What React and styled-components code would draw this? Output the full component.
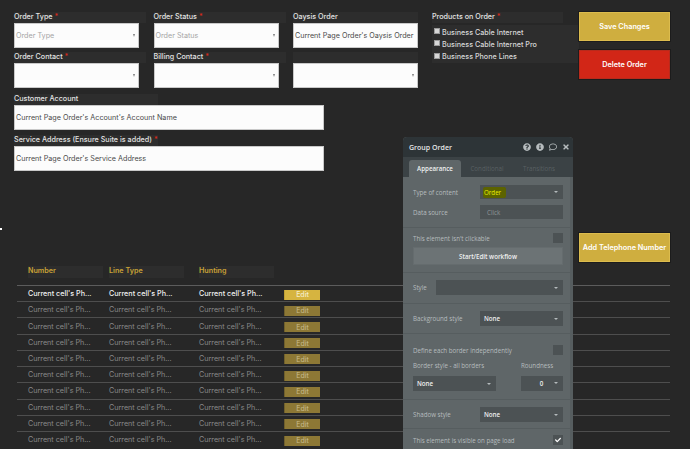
import styled, { createGlobalStyle } from "styled-components";
import { FaQuestionCircle, FaInfoCircle, FaRegComment, FaTimes, FaCheck } from "react-icons/fa";

const GlobalStyle = createGlobalStyle`
  html, body {
    margin: 0;
    padding: 0;
    background: #272727;
  }
  * {
    box-sizing: border-box;
  }
`;

const Page = styled.div`
  position: relative;
  width: 690px;
  height: 449px;
  overflow: hidden;
  padding-top: 12px;
  background: #272727;
  font-family: Inter, "Liberation Sans", sans-serif;
  font-size: 7.2px;
  color: #e4e4e4;
`;
const Dot = styled.div`
  position: absolute;
  left: 0;
  top: 228px;
  width: 2px;
  height: 2px;
  background: #fff;
`;
const TopRow = styled.div`
  display: flex;
  align-items: flex-start;
  padding-left: 14px;
`;
const FormColumn = styled.div`
  width: 404px;
  display: flex;
  flex-direction: column;
`;
const FormGrid = styled.div`
  display: grid;
  grid-template-columns: repeat(3, 125px);
  column-gap: 14.5px;
`;
const Field = styled.div`
  display: flex;
  flex-direction: column;
  width: ${(p) => p.$width || "auto"};
  margin-bottom: ${(p) => p.$mb || 4}px;
`;
const Label = styled.div`
  height: 11px;
  line-height: 10px;
  width: ${(p) => p.$width || "132px"};
  background: #2d2d2d;
  font-weight: 500;
  white-space: nowrap;
`;
const Req = styled.span`
  color: #d32a1a;
  margin-left: 2px;
`;
const InputBox = styled.div`
  height: 25px;
  background: #fcfcfc;
  border: 1px solid #c9c9c9;
  display: flex;
  align-items: center;
  justify-content: space-between;
  padding: 0 2px 0 1px;
  color: ${(p) => (p.$placeholder ? "#a5a5a5" : "#4a4a4a")};
  font-weight: 400;
  white-space: nowrap;
  overflow: hidden;
`;
const SmallCaret = styled.span`
  width: 0;
  height: 0;
  border-left: 1.5px solid transparent;
  border-right: 1.5px solid transparent;
  border-top: 3px solid #808080;
  margin-right: 1px;
`;
const Products = styled.div`
  width: 147px;
  margin-left: 14px;
`;
const CheckList = styled.div`
  margin-top: 2px;
  padding-top: 1px;
  height: 38px;
  background: #2d2d2d;
  display: flex;
  flex-direction: column;
`;
const CheckRow = styled.div`
  height: 12.6px;
  display: flex;
  align-items: center;
  gap: 2px;
  padding-left: 2px;
  white-space: nowrap;
  font-weight: 500;
  color: #d8d8d8;
`;
const CheckBox = styled.span`
  width: 6px;
  height: 6px;
  background: #d6d6d6;
  border: 1px solid #9a9a9a;
  margin-top: -2px;
`;
const Actions = styled.div`
  width: 91px;
  display: flex;
  flex-direction: column;
  gap: 9px;
`;
const ActionButton = styled.div`
  width: 91px;
  height: 29px;
  display: flex;
  align-items: center;
  justify-content: center;
  color: #fff;
  font-weight: 600;
  font-size: 7.3px;
  white-space: nowrap;
  background: ${(p) => (p.$danger ? "#d22617" : "#cfae3f")};
  border: 1px solid ${(p) => (p.$danger ? "#b82a1c" : "#dcbc4e")};
  box-shadow: 0 0 0 1px #1c1c1c;
`;
const AddRow = styled.div`
  display: flex;
  justify-content: flex-end;
  padding-right: 20px;
  margin-top: 58px;
`;
const TableHead = styled.div`
  display: grid;
  grid-template-columns: 81px 90px 85px;
  margin: 4px 0 0 28px;
  height: 19px;
`;
const HeadCell = styled.div`
  width: 75px;
  height: 12px;
  line-height: 9px;
  background: #2d2d2d;
  color: #c9a236;
  font-weight: 600;
`;
const Row = styled.div`
  display: grid;
  grid-template-columns: 81px 90px 85px 36px;
  align-items: center;
  margin-left: 17px;
  width: 653px;
  height: 16.22px;
  padding-left: 11px;
  border-top: 1px solid ${(p) => (p.$active ? "#5c5c5c" : "#4e4e4e")};
  color: ${(p) => (p.$active ? "#f2f2f2" : "#8a8a8a")};
  font-weight: ${(p) => (p.$active ? 500 : 400)};
`;
const Cell = styled.div`
  white-space: nowrap;
`;
const EditButton = styled.div`
  height: 10px;
  margin-top: 2px;
  display: flex;
  align-items: center;
  justify-content: center;
  background: ${(p) => (p.$active ? "#d6b440" : "#8d7835")};
  border-left: 1px solid ${(p) => (p.$active ? "#bfa035" : "#6f5f2c")};
  color: ${(p) => (p.$active ? "#f4ecc8" : "#c9bd8e")};
  font-size: 7px;
`;

const Panel = styled.div`
  position: absolute;
  left: 403px;
  top: 137px;
  width: 170px;
  height: 312px;
  background: #5f6668;
  border-radius: 4px 4px 0 0;
  border-right: 3px solid #565d5f;
  font-family: "Open Sans", "Liberation Sans", sans-serif;
  font-size: 6.2px;
  color: #b6bcbe;
`;
const PanelHeader = styled.div`
  height: 20px;
  margin-right: -3px;
  background: #2d3437;
  border-radius: 4px 4px 0 0;
  display: flex;
  align-items: center;
  justify-content: space-between;
  padding: 0 3px 0 6px;
  color: #e6e8e8;
  font-size: 7px;
  font-weight: 600;
`;
const HeaderIcons = styled.div`
  display: flex;
  align-items: center;
  gap: 5px;
  color: #b6bcbe;
  font-size: 8px;
`;
const Tabs = styled.div`
  height: 20px;
  margin-right: -3px;
  padding: 3px 0 0 6px;
  background: #3b4245;
  display: flex;
`;
const Tab = styled.div`
  width: ${(p) => p.$width}px;
  display: flex;
  align-items: center;
  justify-content: center;
  color: ${(p) => (p.$active ? "#eef0f0" : "#596063")};
  background: ${(p) => (p.$active ? "#5f6668" : "transparent")};
  border-radius: 3px 3px 0 0;
  font-weight: ${(p) => (p.$active ? 600 : 400)};
`;
const Section = styled.div`
  padding: ${(p) => p.$pt}px 7px ${(p) => p.$pb}px 10px;
  border-bottom: 1px solid #565d5f;
  display: flex;
  flex-direction: column;
  gap: ${(p) => p.$gap || 0}px;
`;
const PanelRow = styled.div`
  display: flex;
  align-items: center;
  justify-content: space-between;
  height: ${(p) => p.$h || 15}px;
  white-space: nowrap;
`;
const PanelSelect = styled.div`
  width: ${(p) => p.$width}px;
  height: ${(p) => p.$h || 15}px;
  background: #4c5254;
  display: flex;
  align-items: center;
  justify-content: ${(p) => (p.$center ? "center" : "space-between")};
  position: relative;
  padding: 0 5px 0 4px;
  color: #eceeee;
  font-weight: 600;
`;
const PanelInput = styled(PanelSelect)`
  color: #8f9597;
  font-weight: 400;
  padding-left: 7px;
`;
const Caret = styled.span`
  width: 0;
  height: 0;
  border-left: 2.5px solid transparent;
  border-right: 2.5px solid transparent;
  border-top: 2.5px solid #b4babc;
  ${(p) => p.$over && "position: absolute; right: 5px; top: 6px;"}
`;
const Highlight = styled.span`
  background: #5c6300;
  color: #e8f000;
  padding: 1px 5px 1px 1px;
  margin-left: -1px;
  border-radius: 2px;
  font-weight: 400;
`;
const PanelCheck = styled.div`
  width: 10px;
  height: 10px;
  background: #4c5254;
  display: flex;
  align-items: center;
  justify-content: center;
  color: #fff;
  font-size: 6px;
`;
const WorkflowButton = styled.div`
  height: 18px;
  background: #6c7375;
  border: 1px solid #656c6e;
  display: flex;
  align-items: center;
  justify-content: center;
  color: #eef0f0;
  font-weight: 600;
  font-size: 6.2px;
`;
const SplitRow = styled.div`
  display: flex;
  justify-content: space-between;
`;
const SplitColumn = styled.div`
  display: flex;
  flex-direction: column;
  gap: 5px;
`;
const SplitLabel = styled.div`
  height: 10px;
  line-height: 10px;
  white-space: nowrap;
`;

const rows = Array.from({ length: 10 }, (_, i) => i);

export default function App() {
  return (
    <>
      <GlobalStyle />
      <Page>
        <Dot />
        <TopRow>
          <FormColumn>
            <FormGrid>
              <Field>
                <Label>Order Type<Req>*</Req></Label>
                <InputBox $placeholder>Order Type<SmallCaret /></InputBox>
              </Field>
              <Field>
                <Label>Order Status<Req>*</Req></Label>
                <InputBox $placeholder>Order Status<SmallCaret /></InputBox>
              </Field>
              <Field>
                <Label $width="125px">Oaysis Order</Label>
                <InputBox>Current Page Order's Oaysis Order</InputBox>
              </Field>
              <Field $mb={6}>
                <Label>Order Contact<Req>*</Req></Label>
                <InputBox><span /><SmallCaret /></InputBox>
              </Field>
              <Field $mb={6}>
                <Label>Billing Contact<Req>*</Req></Label>
                <InputBox><span /><SmallCaret /></InputBox>
              </Field>
              <Field $mb={6}>
                <Label $width="125px" />
                <InputBox><span /><SmallCaret /></InputBox>
              </Field>
            </FormGrid>
            <Field $width="310px" $mb={5}>
              <Label $width="144px">Customer Account</Label>
              <InputBox>Current Page Order's Account's Account Name</InputBox>
            </Field>
            <Field $width="310px">
              <Label $width="144px">Service Address (Ensure Suite is added)<Req>*</Req></Label>
              <InputBox>Current Page Order's Service Address</InputBox>
            </Field>
          </FormColumn>
          <Products>
            <Label $width="131px">Products on Order<Req>*</Req></Label>
            <CheckList>
              <CheckRow><CheckBox />Business Cable Internet</CheckRow>
              <CheckRow><CheckBox />Business Cable Internet Pro</CheckRow>
              <CheckRow><CheckBox />Business Phone Lines</CheckRow>
            </CheckList>
          </Products>
          <Actions>
            <ActionButton>Save Changes</ActionButton>
            <ActionButton $danger>Delete Order</ActionButton>
          </Actions>
        </TopRow>
        <AddRow>
          <ActionButton>Add Telephone Number</ActionButton>
        </AddRow>
        <TableHead>
          <HeadCell>Number</HeadCell>
          <HeadCell>Line Type</HeadCell>
          <HeadCell>Hunting</HeadCell>
        </TableHead>
        {rows.map((i) => (
          <Row key={i} $active={i === 0}>
            <Cell>Current cell's Ph...</Cell>
            <Cell>Current cell's Ph...</Cell>
            <Cell>Current cell's Ph...</Cell>
            <EditButton $active={i === 0}>Edit</EditButton>
          </Row>
        ))}
        <Panel>
          <PanelHeader>
            Group Order
            <HeaderIcons>
              <FaQuestionCircle />
              <FaInfoCircle />
              <FaRegComment />
              <FaTimes />
            </HeaderIcons>
          </PanelHeader>
          <Tabs>
            <Tab $active $width={52}>Appearance</Tab>
            <Tab $width={52}>Conditional</Tab>
            <Tab $width={52}>Transitions</Tab>
          </Tabs>
          <Section $pt={8} $pb={8} $gap={6}>
            <PanelRow $h={14}>
              Type of content
              <PanelSelect $width={83} $h={14}>
                <Highlight>Order</Highlight>
                <Caret />
              </PanelSelect>
            </PanelRow>
            <PanelRow $h={14}>
              Data source
              <PanelInput $width={83} $h={14}>Click</PanelInput>
            </PanelRow>
          </Section>
          <Section $pt={5} $pb={7} $gap={4}>
            <PanelRow $h={10}>
              This element isn't clickable
              <PanelCheck />
            </PanelRow>
            <WorkflowButton>Start/Edit workflow</WorkflowButton>
          </Section>
          <Section $pt={7} $pb={8}>
            <PanelRow>
              Style
              <PanelSelect $width={127}><span /><Caret /></PanelSelect>
            </PanelRow>
          </Section>
          <Section $pt={7} $pb={7}>
            <PanelRow>
              Background style
              <PanelSelect $width={83}>None<Caret /></PanelSelect>
            </PanelRow>
          </Section>
          <Section $pt={11} $pb={8} $gap={6}>
            <PanelRow $h={10}>
              Define each border independently
              <PanelCheck />
            </PanelRow>
            <SplitRow>
              <SplitColumn>
                <SplitLabel>Border style - all borders</SplitLabel>
                <PanelSelect $width={83}>None<Caret /></PanelSelect>
              </SplitColumn>
              <SplitColumn>
                <SplitLabel>Roundness</SplitLabel>
                <PanelSelect $width={42} $center>0<Caret $over /></PanelSelect>
              </SplitColumn>
            </SplitRow>
          </Section>
          <Section $pt={7} $pb={6}>
            <PanelRow>
              Shadow style
              <PanelSelect $width={83}>None<Caret /></PanelSelect>
            </PanelRow>
          </Section>
          <Section $pt={6} $pb={5}>
            <PanelRow $h={10}>
              This element is visible on page load
              <PanelCheck><FaCheck /></PanelCheck>
            </PanelRow>
          </Section>
        </Panel>
      </Page>
    </>
  );
}
